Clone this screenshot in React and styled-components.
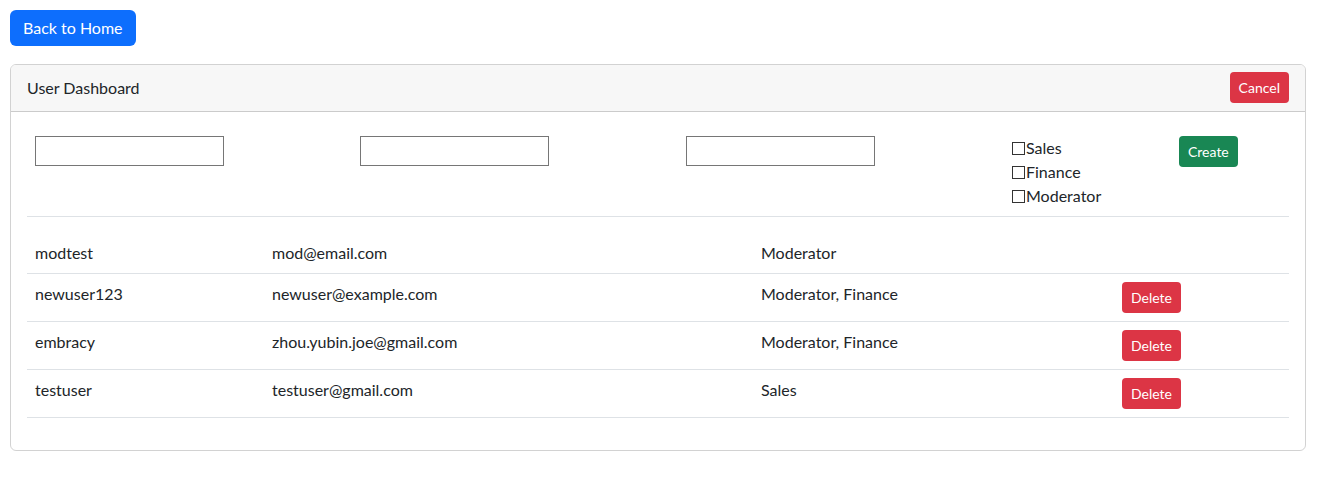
import React from 'react';
import styled, { createGlobalStyle } from 'styled-components';

const GlobalStyle = createGlobalStyle`
  body {
    margin: 0;
    font-family: Lato, "Noto Sans", sans-serif;
    font-size: 16px;
    line-height: 1.5;
    color: #212529;
    background: #fff;
  }
  * { box-sizing: border-box; }
`;

const Page = styled.div`
  padding: 10px 37px 10px 10px;
`;

const Button = styled.button`
  display: ${p => (p.$block ? 'block' : 'inline-block')};
  font-family: inherit;
  border: 1px solid transparent;
  color: #fff;
  cursor: pointer;
  background: ${p => p.$bg};
  font-size: ${p => (p.$small ? '14px' : '16px')};
  line-height: ${p => (p.$small ? '21px' : '24px')};
  padding: ${p => (p.$small ? '4px 8px' : '5px 12px')};
  border-radius: ${p => (p.$small ? '4px' : '6px')};
`;

const Card = styled.div`
  margin-top: 18px;
  border: 1px solid rgba(0, 0, 0, 0.175);
  border-radius: 6px;
`;

const CardHeader = styled.div`
  display: flex;
  justify-content: space-between;
  align-items: center;
  padding: 7px 16px 8px;
  background: #f7f7f7;
  border-bottom: 1px solid rgba(0, 0, 0, 0.175);
  border-radius: 5px 5px 0 0;
`;

const CardBody = styled.div`
  padding: 16px;
`;

const FormRow = styled.div`
  display: grid;
  grid-template-columns: 325px 326px 326px 167px 1fr;
  padding-top: 8px;
`;

const Col = styled.div`
  padding-left: 8px;
`;

const TextInput = styled.input`
  display: block;
  width: 189px;
  height: 30px;
  border: 1px solid #767676;
  border-radius: 0;
  font-family: inherit;
  font-size: 14px;
  padding: 2px 4px;
`;

const CheckLabel = styled.label`
  display: flex;
  align-items: center;
  height: 24px;
`;

const Box = styled.input.attrs({ type: 'checkbox' })`
  appearance: none;
  width: 13px;
  height: 13px;
  margin: 0 1px 0 0;
  border: 1px solid #333;
  background: #fff;
`;

const Rule = styled.hr`
  margin: 8px 0 16px;
  border: 0;
  border-top: 1px solid #dee2e6;
`;

const Table = styled.table`
  width: 100%;
  border-collapse: collapse;
  margin-bottom: 16px;
`;

const Cell = styled.td`
  padding: 8px;
  vertical-align: top;
  border-bottom: 1px solid #dee2e6;
  width: ${p => p.$w};
`;

const users = [
  { name: 'modtest', email: 'mod@email.com', roles: 'Moderator', del: false },
  { name: 'newuser123', email: 'newuser@example.com', roles: 'Moderator, Finance', del: true },
  { name: 'embracy', email: 'zhou.yubin.joe@gmail.com', roles: 'Moderator, Finance', del: true },
  { name: 'testuser', email: 'testuser@gmail.com', roles: 'Sales', del: true },
];

export default function App() {
  return (
    <Page>
      <GlobalStyle />
      <Button $block $bg="#0d6efd">Back to Home</Button>
      <Card>
        <CardHeader>
          <span>User Dashboard</span>
          <Button $small $block $bg="#dc3545">Cancel</Button>
        </CardHeader>
        <CardBody>
          <FormRow>
            <Col><TextInput /></Col>
            <Col><TextInput /></Col>
            <Col><TextInput /></Col>
            <Col>
              <CheckLabel><Box />Sales</CheckLabel>
              <CheckLabel><Box />Finance</CheckLabel>
              <CheckLabel><Box />Moderator</CheckLabel>
            </Col>
            <Col>
              <Button $small $block $bg="#198754">Create</Button>
            </Col>
          </FormRow>
          <Rule />
          <Table>
            <tbody>
              {users.map(u => (
                <tr key={u.name}>
                  <Cell $w="237px">{u.name}</Cell>
                  <Cell $w="489px">{u.email}</Cell>
                  <Cell $w="361px">{u.roles}</Cell>
                  <Cell>{u.del && <Button $small $block $bg="#dc3545">Delete</Button>}</Cell>
                </tr>
              ))}
            </tbody>
          </Table>
        </CardBody>
      </Card>
    </Page>
  );
}
